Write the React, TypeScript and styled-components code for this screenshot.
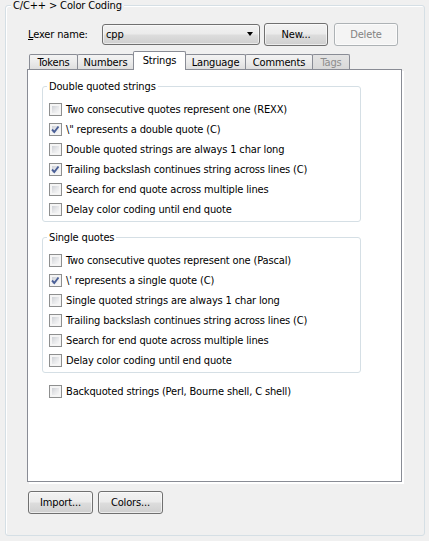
import React from 'react';
import styled, { createGlobalStyle } from 'styled-components';

const Global = createGlobalStyle`
  html, body { margin: 0; padding: 0; background: #f0f0f0; }
  body {
    font-family: "DejaVu Sans Condensed", "Liberation Sans", Arial, sans-serif;
    font-size: 11px;
    letter-spacing: -0.15px;
    color: #000;
  }
  #root { width: 429px; height: 541px; }
  * { box-sizing: border-box; }
`;

const Page = styled.div`
  width: 429px;
  height: 541px;
  padding: 5px 5px 0 5px;
  background: #f0f0f0;
`;

const OuterGroup = styled.div`
  position: relative;
  width: 420px;
  height: 531px;
  border: 1px solid #d5dfe5;
  border-radius: 3px;
  box-shadow: inset 1px 1px 0 #fff;
  padding: 16px 0 0 21px;
  display: flex;
  flex-direction: column;
`;

const GroupTitle = styled.span<{ $bg: string; $left: number }>`
  position: absolute;
  top: -7px;
  left: ${(p) => p.$left}px;
  padding: 0 2px;
  line-height: 13px;
  background: ${(p) => p.$bg};
  white-space: nowrap;
`;

const LexerRow = styled.div`
  display: flex;
  align-items: center;
  height: 24px;
`;

const Label = styled.label`
  width: 75px;
  padding-left: 1px;
  u { text-decoration: underline; }
`;

const Combo = styled.div`
  width: 158px;
  height: 21px;
  border: 1px solid #707070;
  border-radius: 3px;
  background: linear-gradient(#f2f2f2 0%, #ebebeb 48%, #dddddd 52%, #cfcfcf 100%);
  box-shadow: inset 0 0 0 1px rgba(255, 255, 255, 0.55);
  display: flex;
  align-items: center;
  justify-content: space-between;
  padding: 0 6px 0 3px;
`;

const Arrow = styled.span`
  width: 0;
  height: 0;
  border-left: 3.5px solid transparent;
  border-right: 3.5px solid transparent;
  border-top: 4px solid #000;
`;

const Button = styled.button<{ $w: number; $ml?: number; $disabled?: boolean }>`
  width: ${(p) => p.$w}px;
  height: 23px;
  margin-left: ${(p) => p.$ml ?? 0}px;
  padding: 0;
  font: inherit;
  letter-spacing: inherit;
  border-radius: 3px;
  border: 1px solid ${(p) => (p.$disabled ? '#adb2b5' : '#707070')};
  color: ${(p) => (p.$disabled ? '#838383' : '#000')};
  background: ${(p) =>
    p.$disabled
      ? '#f4f4f4'
      : 'linear-gradient(#f2f2f2 0%, #ebebeb 48%, #dddddd 52%, #cfcfcf 100%)'};
  box-shadow: inset 0 0 0 1px rgba(255, 255, 255, 0.6);
`;

const TabStrip = styled.div`
  display: flex;
  align-items: flex-end;
  height: 18px;
  margin-top: 5px;
  padding-left: 2px;
  position: relative;
  z-index: 1;
`;

const Tab = styled.div<{ $w: number; $selected?: boolean; $disabled?: boolean }>`
  width: ${(p) => p.$w}px;
  height: ${(p) => (p.$selected ? 19 : 15)}px;
  margin-right: -1px;
  margin-bottom: ${(p) => (p.$selected ? -1 : 0)}px;
  border: 1px solid #898c95;
  border-bottom: none;
  border-radius: 2px 2px 0 0;
  display: flex;
  align-items: center;
  justify-content: center;
  padding-bottom: ${(p) => (p.$selected ? 1 : 0)}px;
  color: ${(p) => (p.$disabled ? '#8d8d8d' : '#000')};
  background: ${(p) =>
    p.$selected
      ? '#ffffff'
      : p.$disabled
      ? 'linear-gradient(#e4e4e4, #d9d9d9)'
      : 'linear-gradient(#f3f3f3 0%, #ebebeb 50%, #dedede 100%)'};
  position: relative;
  z-index: ${(p) => (p.$selected ? 2 : 1)};
`;

const Panel = styled.div`
  width: 375px;
  height: 413px;
  border: 1px solid #898c95;
  background: #fff;
  box-shadow: 2px 2px 0 #fff;
  padding: 16px 0 0 14px;
  display: flex;
  flex-direction: column;
  align-items: flex-start;
`;

const Group = styled.div<{ $mt?: number }>`
  position: relative;
  width: 319px;
  margin-top: ${(p) => p.$mt ?? 0}px;
  border: 1px solid #d5dfe5;
  border-radius: 3px;
  padding: 12px 6px 2px 6px;
  display: flex;
  flex-direction: column;
`;

const CheckRow = styled.div<{ $mt?: number; $ml?: number }>`
  display: flex;
  align-items: center;
  gap: 4px;
  height: 20px;
  margin-top: ${(p) => p.$mt ?? 0}px;
  margin-left: ${(p) => p.$ml ?? 0}px;
  white-space: nowrap;
`;

const Box = styled.span`
  position: relative;
  width: 13px;
  height: 13px;
  flex: none;
  border: 1px solid #8e8f8f;
  background: #f4f4f4;
  &::before {
    content: '';
    position: absolute;
    inset: 1px;
    background: linear-gradient(135deg, #cdd0d5 0%, #e6e7e9 50%, #f7f7f7 100%);
    border: 1px solid #f5f5f5;
  }
  svg {
    position: absolute;
    left: 0;
    top: 0;
    z-index: 1;
  }
`;

const BottomRow = styled.div`
  display: flex;
  gap: 5px;
  margin-top: 9px;
  padding-left: 1px;
`;

function Check({ checked, label, mt, ml }: { checked?: boolean; label: string; mt?: number; ml?: number }) {
  return (
    <CheckRow $mt={mt} $ml={ml}>
      <Box>
        {checked && (
          <svg width="11" height="11" viewBox="0 0 11 11">
            <polyline points="2,5.5 4.3,8 8.5,2.5" fill="none" stroke="#4a5f97" strokeWidth="1.9" strokeLinejoin="miter" />
          </svg>
        )}
      </Box>
      <span>{label}</span>
    </CheckRow>
  );
}

export default function App() {
  return (
    <>
      <Global />
      <Page>
        <OuterGroup>
          <GroupTitle $bg="#f0f0f0" $left={5}>C/C++ &gt; Color Coding</GroupTitle>
          <LexerRow>
            <Label>
              <u>L</u>exer name:
            </Label>
            <Combo>
              <span>cpp</span>
              <Arrow />
            </Combo>
            <Button $w={64} $ml={4}>New...</Button>
            <Button $w={64} $ml={6} $disabled>Delete</Button>
          </LexerRow>
          <TabStrip>
            <Tab $w={49}>Tokens</Tab>
            <Tab $w={57}>Numbers</Tab>
            <Tab $w={53} $selected>Strings</Tab>
            <Tab $w={61}>Language</Tab>
            <Tab $w={68}>Comments</Tab>
            <Tab $w={38} $disabled>Tags</Tab>
          </TabStrip>
          <Panel>
            <Group>
              <GroupTitle $bg="#fff" $left={4}>Double quoted strings</GroupTitle>
              <Check label="Two consecutive quotes represent one (REXX)" />
              <Check checked label={'\\" represents a double quote (C)'} />
              <Check label="Double quoted strings are always 1 char long" />
              <Check checked label="Trailing backslash continues string across lines (C)" />
              <Check label="Search for end quote across multiple lines" />
              <Check label="Delay color coding until end quote" />
            </Group>
            <Group $mt={15}>
              <GroupTitle $bg="#fff" $left={4}>Single quotes</GroupTitle>
              <Check label="Two consecutive quotes represent one (Pascal)" />
              <Check checked label={"\\' represents a single quote (C)"} />
              <Check label="Single quoted strings are always 1 char long" />
              <Check label="Trailing backslash continues string across lines (C)" />
              <Check label="Search for end quote across multiple lines" />
              <Check label="Delay color coding until end quote" />
            </Group>
            <Check mt={8} ml={7} label="Backquoted strings (Perl, Bourne shell, C shell)" />
          </Panel>
          <BottomRow>
            <Button $w={65}>Import...</Button>
            <Button $w={65}>Colors...</Button>
          </BottomRow>
        </OuterGroup>
      </Page>
    </>
  );
}
